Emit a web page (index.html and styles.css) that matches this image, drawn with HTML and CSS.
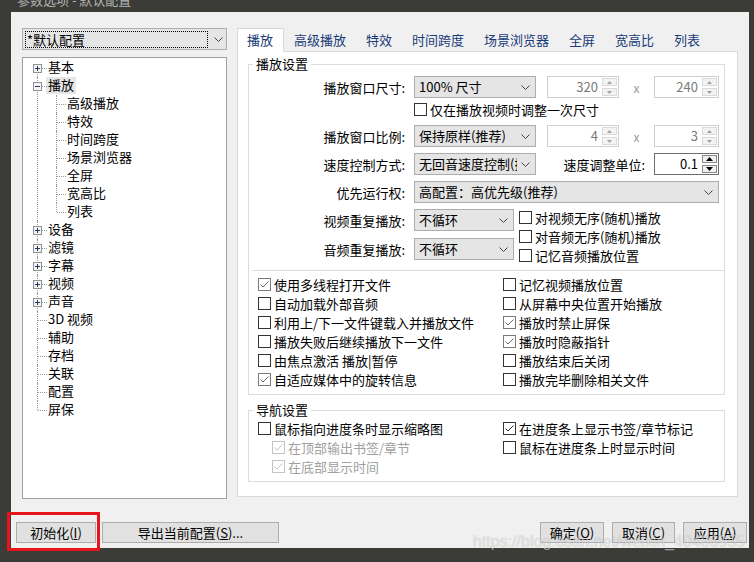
FILE: index.html
```html
<!DOCTYPE html>
<html lang="zh-CN">
<head>
<meta charset="utf-8">
<title>参数选项 - 默认配置</title>
<link rel="stylesheet" href="styles.css">
</head>
<body>
<div class="titlebar"><span class="title-text">参数选项 - 默认配置</span></div>
<div class="window">
  <div class="main">
    <div class="left-col">
      <div class="combo profile">
        <span class="focus">*默认配置</span>
        <svg class="chev" width="9" height="5" viewBox="0 0 9 5"><path d="M0.5 0.5L4.5 4.5L8.5 0.5" fill="none" stroke="#444"/></svg>
      </div>
      <ul class="tree">
        <li class="n"><div class="nr"><span class="exp"><svg width="9" height="9" viewBox="0 0 9 9"><rect x="0.5" y="0.5" width="8" height="8" fill="#f4f4f4" stroke="#919191"/><path d="M2 4.5h5M4.5 2v5" stroke="#22386b"/></svg></span><span class="t">基本</span></div></li>
        <li class="n"><div class="nr"><span class="exp"><svg width="9" height="9" viewBox="0 0 9 9"><rect x="0.5" y="0.5" width="8" height="8" fill="#f4f4f4" stroke="#919191"/><path d="M2 4.5h5" stroke="#22386b"/></svg></span><span class="t sel">播放</span></div>
          <ul class="sub">
            <li class="s"><div class="nr"><span class="t">高级播放</span></div></li>
            <li class="s"><div class="nr"><span class="t">特效</span></div></li>
            <li class="s"><div class="nr"><span class="t">时间跨度</span></div></li>
            <li class="s"><div class="nr"><span class="t">场景浏览器</span></div></li>
            <li class="s"><div class="nr"><span class="t">全屏</span></div></li>
            <li class="s"><div class="nr"><span class="t">宽高比</span></div></li>
            <li class="s"><div class="nr"><span class="t">列表</span></div></li>
          </ul>
        </li>
        <li class="n"><div class="nr"><span class="exp"><svg width="9" height="9" viewBox="0 0 9 9"><rect x="0.5" y="0.5" width="8" height="8" fill="#f4f4f4" stroke="#919191"/><path d="M2 4.5h5M4.5 2v5" stroke="#22386b"/></svg></span><span class="t">设备</span></div></li>
        <li class="n"><div class="nr"><span class="exp"><svg width="9" height="9" viewBox="0 0 9 9"><rect x="0.5" y="0.5" width="8" height="8" fill="#f4f4f4" stroke="#919191"/><path d="M2 4.5h5M4.5 2v5" stroke="#22386b"/></svg></span><span class="t">滤镜</span></div></li>
        <li class="n"><div class="nr"><span class="exp"><svg width="9" height="9" viewBox="0 0 9 9"><rect x="0.5" y="0.5" width="8" height="8" fill="#f4f4f4" stroke="#919191"/><path d="M2 4.5h5M4.5 2v5" stroke="#22386b"/></svg></span><span class="t">字幕</span></div></li>
        <li class="n"><div class="nr"><span class="exp"><svg width="9" height="9" viewBox="0 0 9 9"><rect x="0.5" y="0.5" width="8" height="8" fill="#f4f4f4" stroke="#919191"/><path d="M2 4.5h5M4.5 2v5" stroke="#22386b"/></svg></span><span class="t">视频</span></div></li>
        <li class="n"><div class="nr"><span class="exp"><svg width="9" height="9" viewBox="0 0 9 9"><rect x="0.5" y="0.5" width="8" height="8" fill="#f4f4f4" stroke="#919191"/><path d="M2 4.5h5M4.5 2v5" stroke="#22386b"/></svg></span><span class="t">声音</span></div></li>
        <li class="n"><div class="nr"><span class="t">3D 视频</span></div></li>
        <li class="n"><div class="nr"><span class="t">辅助</span></div></li>
        <li class="n"><div class="nr"><span class="t">存档</span></div></li>
        <li class="n"><div class="nr"><span class="t">关联</span></div></li>
        <li class="n"><div class="nr"><span class="t">配置</span></div></li>
        <li class="n"><div class="nr"><span class="t">屏保</span></div></li>
      </ul>
    </div>

    <div class="right-col">
      <div class="tabs">
        <div class="tab active">播放</div>
        <div class="tab">高级播放</div>
        <div class="tab">特效</div>
        <div class="tab">时间跨度</div>
        <div class="tab">场景浏览器</div>
        <div class="tab">全屏</div>
        <div class="tab">宽高比</div>
        <div class="tab">列表</div>
      </div>
      <div class="panel">
        <fieldset class="group g-play">
          <legend>播放设置</legend>

          <div class="frow">
            <span class="lbl">播放窗口尺寸:</span>
            <div class="combo w122"><span class="cv">100% 尺寸</span><svg class="chev" width="9" height="5" viewBox="0 0 9 5"><path d="M0.5 0.5L4.5 4.5L8.5 0.5" fill="none" stroke="#444"/></svg></div>
            <div class="spin dis w72"><span class="sv">320</span><span class="sbtns"><span class="sb"><svg width="5" height="3" viewBox="0 0 5 3"><path d="M0 3L2.5 0L5 3Z" fill="#a0a0a0"/></svg></span><span class="sb"><svg width="5" height="3" viewBox="0 0 5 3"><path d="M0 0L2.5 3L5 0Z" fill="#a0a0a0"/></svg></span></span></div>
            <span class="times">x</span>
            <div class="spin dis w65"><span class="sv">240</span><span class="sbtns"><span class="sb"><svg width="5" height="3" viewBox="0 0 5 3"><path d="M0 3L2.5 0L5 3Z" fill="#a0a0a0"/></svg></span><span class="sb"><svg width="5" height="3" viewBox="0 0 5 3"><path d="M0 0L2.5 3L5 0Z" fill="#a0a0a0"/></svg></span></span></div>
          </div>

          <div class="crow">
            <span class="cbi"><span class="cb"></span>仅在播放视频时调整一次尺寸</span>
          </div>

          <div class="frow mt7">
            <span class="lbl">播放窗口比例:</span>
            <div class="combo w122"><span class="cv">保持原样(推荐)</span><svg class="chev" width="9" height="5" viewBox="0 0 9 5"><path d="M0.5 0.5L4.5 4.5L8.5 0.5" fill="none" stroke="#444"/></svg></div>
            <div class="spin dis w72"><span class="sv">4</span><span class="sbtns"><span class="sb"><svg width="5" height="3" viewBox="0 0 5 3"><path d="M0 3L2.5 0L5 3Z" fill="#a0a0a0"/></svg></span><span class="sb"><svg width="5" height="3" viewBox="0 0 5 3"><path d="M0 0L2.5 3L5 0Z" fill="#a0a0a0"/></svg></span></span></div>
            <span class="times">x</span>
            <div class="spin dis w65"><span class="sv">3</span><span class="sbtns"><span class="sb"><svg width="5" height="3" viewBox="0 0 5 3"><path d="M0 3L2.5 0L5 3Z" fill="#a0a0a0"/></svg></span><span class="sb"><svg width="5" height="3" viewBox="0 0 5 3"><path d="M0 0L2.5 3L5 0Z" fill="#a0a0a0"/></svg></span></span></div>
          </div>

          <div class="frow mt6">
            <span class="lbl">速度控制方式:</span>
            <div class="combo w122"><span class="cv">无回音速度控制(推荐)</span><svg class="chev" width="9" height="5" viewBox="0 0 9 5"><path d="M0.5 0.5L4.5 4.5L8.5 0.5" fill="none" stroke="#444"/></svg></div>
            <span class="lbl2">速度调整单位:</span>
            <div class="spin act w65"><span class="sv">0.1</span><span class="sbtns"><span class="sb"><svg width="7" height="4" viewBox="0 0 7 4"><path d="M0 4L3.5 0L7 4Z" fill="#000"/></svg></span><span class="sb"><svg width="7" height="4" viewBox="0 0 7 4"><path d="M0 0L3.5 4L7 0Z" fill="#000"/></svg></span></span></div>
          </div>

          <div class="frow mt6">
            <span class="lbl">优先运行权:</span>
            <div class="combo w305"><span class="cv">高配置：高优先级(推荐)</span><svg class="chev" width="9" height="5" viewBox="0 0 9 5"><path d="M0.5 0.5L4.5 4.5L8.5 0.5" fill="none" stroke="#444"/></svg></div>
          </div>

          <div class="rep">
            <div class="rep-l">
              <div class="frow">
                <span class="lbl">视频重复播放:</span>
                <div class="combo w100"><span class="cv">不循环</span><svg class="chev" width="9" height="5" viewBox="0 0 9 5"><path d="M0.5 0.5L4.5 4.5L8.5 0.5" fill="none" stroke="#444"/></svg></div>
              </div>
              <div class="frow mt7">
                <span class="lbl">音频重复播放:</span>
                <div class="combo w100"><span class="cv">不循环</span><svg class="chev" width="9" height="5" viewBox="0 0 9 5"><path d="M0.5 0.5L4.5 4.5L8.5 0.5" fill="none" stroke="#444"/></svg></div>
              </div>
            </div>
            <div class="rep-r">
              <span class="cbi"><span class="cb"></span>对视频无序(随机)播放</span>
              <span class="cbi"><span class="cb"></span>对音频无序(随机)播放</span>
              <span class="cbi"><span class="cb"></span>记忆音频播放位置</span>
            </div>
          </div>

          <div class="sep"></div>

          <div class="chk">
            <span class="cbi"><span class="cb on"><svg width="11" height="11" viewBox="0 0 11 11"><path d="M1.5 5.5L4 8L9.5 2.5" fill="none" stroke="#6a6a6a"/></svg></span>使用多线程打开文件</span>
            <span class="cbi"><span class="cb"></span>记忆视频播放位置</span>
            <span class="cbi"><span class="cb"></span>自动加载外部音频</span>
            <span class="cbi"><span class="cb"></span>从屏幕中央位置开始播放</span>
            <span class="cbi"><span class="cb"></span>利用上/下一文件键载入并播放文件</span>
            <span class="cbi"><span class="cb on"><svg width="11" height="11" viewBox="0 0 11 11"><path d="M1.5 5.5L4 8L9.5 2.5" fill="none" stroke="#6a6a6a"/></svg></span>播放时禁止屏保</span>
            <span class="cbi"><span class="cb"></span>播放失败后继续播放下一文件</span>
            <span class="cbi"><span class="cb on"><svg width="11" height="11" viewBox="0 0 11 11"><path d="M1.5 5.5L4 8L9.5 2.5" fill="none" stroke="#6a6a6a"/></svg></span>播放时隐蔽指针</span>
            <span class="cbi"><span class="cb"></span>由焦点激活 播放|暂停</span>
            <span class="cbi"><span class="cb"></span>播放结束后关闭</span>
            <span class="cbi"><span class="cb on"><svg width="11" height="11" viewBox="0 0 11 11"><path d="M1.5 5.5L4 8L9.5 2.5" fill="none" stroke="#6a6a6a"/></svg></span>自适应媒体中的旋转信息</span>
            <span class="cbi"><span class="cb"></span>播放完毕删除相关文件</span>
          </div>
        </fieldset>

        <fieldset class="group g-nav">
          <legend>导航设置</legend>
          <div class="chk nav">
            <span class="cbi"><span class="cb"></span>鼠标指向进度条时显示缩略图</span>
            <span class="cbi"><span class="cb on dark"><svg width="11" height="11" viewBox="0 0 11 11"><path d="M1.5 5.5L4 8L9.5 2.5" fill="none" stroke="#333"/></svg></span>在进度条上显示书签/章节标记</span>
            <span class="cbi sub-i dis"><span class="cb on"><svg width="11" height="11" viewBox="0 0 11 11"><path d="M1.5 5.5L4 8L9.5 2.5" fill="none" stroke="#c4c4c4"/></svg></span>在顶部输出书签/章节</span>
            <span class="cbi"><span class="cb"></span>鼠标在进度条上时显示时间</span>
            <span class="cbi sub-i dis"><span class="cb on"><svg width="11" height="11" viewBox="0 0 11 11"><path d="M1.5 5.5L4 8L9.5 2.5" fill="none" stroke="#c4c4c4"/></svg></span>在底部显示时间</span>
          </div>
        </fieldset>
      </div>
    </div>
  </div>

  <div class="footer">
    <div class="btns">
      <button class="btn w80">初始化(<u>I</u>)</button>
      <button class="btn w177">导出当前配置(<u>S</u>)...</button>
    </div>
    <div class="btns right">
      <button class="btn w64">确定(<u>O</u>)</button>
      <button class="btn w63">取消(<u>C</u>)</button>
      <button class="btn w64">应用(<u>A</u>)</button>
    </div>
  </div>
</div>
<div class="annot"></div>
<div class="watermark">https://blog.csdn.net/weixin_40486955</div>
</body>
</html>
```

FILE: styles.css
```css
* { box-sizing: border-box; }
html, body { margin: 0; padding: 0; }
body {
  width: 754px;
  height: 562px;
  overflow: hidden;
  position: relative;
  background: #3b3b38;
  font-family: "Noto Sans CJK SC", "Noto Sans", sans-serif;
  font-size: 13px;
  color: #000;
}

.titlebar {
  height: 12px;
  overflow: hidden;
  padding-left: 17px;
}
.title-text {
  display: block;
  margin-top: -7px;
  line-height: 13px;
  font-size: 13px;
  color: #b5b5b5;
}

.window {
  margin-left: 11px;
  width: 738px;
  height: 536px;
  background: #f0f0f0;
  display: flex;
  flex-direction: column;
}

.main {
  display: flex;
  gap: 10px;
  padding: 16px 0 0 11px;
}

.left-col {
  width: 205px;
  display: flex;
  flex-direction: column;
  gap: 7px;
}

/* combo box */
.combo {
  height: 22px;
  border: 1px solid #adadad;
  background: #e5e5e5;
  display: flex;
  align-items: center;
  padding: 0 5px 0 4px;
  white-space: nowrap;
  line-height: 20px;
  flex: none;
}
.cv { flex: 1; overflow: hidden; }
.chev { flex: none; margin-left: 4px; }
.w122 { width: 122px; }
.w100 { width: 100px; }
.w305 { width: 305px; }

.profile { padding-left: 2px; padding-right: 3px; }
.profile .focus {
  width: 183px;
  height: 17px;
  border: 1px dotted #000;
  line-height: 15px;
  padding-left: 1px;
}
.profile .chev { margin-left: 6px; }

/* tree */
.tree {
  list-style: none;
  margin: 0;
  padding: 1px 0 0 0;
  height: 442px;
  border: 1px solid #a0a0a0;
  background: #fff;
}
.tree ul { list-style: none; margin: 0; padding: 0; }
.n { position: relative; padding-left: 25px; }
.n::before {
  content: "";
  position: absolute;
  left: 14px;
  top: 0;
  bottom: 0;
  border-left: 1px dotted #9a9a9a;
}
.n:first-child::before { top: 9px; }
.n:last-child::before { bottom: auto; height: 9px; }
.n::after {
  content: "";
  position: absolute;
  left: 15px;
  top: 9px;
  width: 9px;
  border-top: 1px dotted #9a9a9a;
}
.s { position: relative; padding-left: 19px; }
.s::before {
  content: "";
  position: absolute;
  left: 8px;
  top: 0;
  bottom: 0;
  border-left: 1px dotted #9a9a9a;
}
.s:last-child::before { bottom: auto; height: 9px; }
.s::after {
  content: "";
  position: absolute;
  left: 9px;
  top: 9px;
  width: 9px;
  border-top: 1px dotted #9a9a9a;
}
.exp {
  position: absolute;
  left: 10px;
  top: 5px;
  width: 9px;
  height: 9px;
  z-index: 1;
  display: block;
}
.exp svg { display: block; }
.nr { height: 18px; white-space: nowrap; }
.t {
  display: inline-block;
  height: 17px;
  line-height: 16px;
  padding: 0 2px;
  margin-left: -2px;
  vertical-align: top;
}
.t.sel { background: #e6e6e6; }

/* right column */
.right-col { width: 501px; }
.tabs {
  display: flex;
  height: 24px;
  position: relative;
  z-index: 1;
  margin-bottom: -1px;
}
.tab {
  height: 24px;
  padding: 1px 10px 0;
  line-height: 21px;
  color: #1b3b78;
  white-space: nowrap;
}
.tab.active {
  background: #fff;
  border: 1px solid #d9d9d9;
  border-bottom: none;
  padding: 0 10px 0 9px;
}
.panel {
  height: 446px;
  border: 1px solid #d9d9d9;
  background: #fff;
  padding: 0 0 0 10px;
}

.group {
  margin: 3px 0 0 0;
  width: 477px;
  border: 1px solid #dcdcdc;
  padding: 3px 0 5px 0;
  min-width: 0;
}
.group legend {
  margin-left: 4px;
  padding: 0 3px;
  line-height: 18px;
}
.g-nav { margin-top: 6px; padding-top: 0; padding-bottom: 5px; }

.frow {
  display: flex;
  align-items: center;
  height: 22px;
  white-space: nowrap;
}
.mt6 { margin-top: 6px; }
.mt7 { margin-top: 7px; }
.lbl {
  width: 156px;
  margin-right: 9px;
  text-align: right;
  flex: none;
}
.lbl2 {
  width: 109px;
  margin-right: 9px;
  text-align: right;
  flex: none;
}
.crow {
  height: 18px;
  margin-top: 2px;
  padding-left: 165px;
  display: flex;
  align-items: center;
}

/* spin box */
.spin {
  height: 22px;
  border: 1px solid #cfcfcf;
  background: #fff;
  display: flex;
  align-items: center;
  padding: 2px 1px 2px 0;
  flex: none;
}
.w72 { width: 72px; margin-left: 11px; }
.w65 { width: 65px; }
.sv {
  flex: 1;
  text-align: right;
  padding-right: 4px;
  line-height: 18px;
  color: #7a7a7a;
}
.sbtns {
  width: 15px;
  height: 18px;
  display: flex;
  flex-direction: column;
  gap: 2px;
}
.sb {
  flex: 1;
  border: 1px solid #dadada;
  background: #f3f3f3;
  display: flex;
  align-items: center;
  justify-content: center;
}
.sb svg { display: block; }
.spin.act { border-color: #6e6e6e; }
.spin.act .sv { color: #000; }
.spin.act .sb { border-color: #8a8a8a; background: #f0f0f0; }
.times {
  width: 35px;
  text-align: center;
  color: #9a9a9a;
  font-size: 12px;
  flex: none;
}

/* repeat block */
.rep { display: flex; margin-top: 6px; }
.rep-l { width: 265px; flex: none; }
.rep-r {
  margin-left: 5px;
  margin-top: -1px;
  display: flex;
  flex-direction: column;
}

/* checkboxes */
.cbi {
  display: flex;
  align-items: center;
  height: 19px;
  white-space: nowrap;
}
.cb {
  width: 13px;
  height: 13px;
  border: 1px solid #333;
  background: #fff;
  margin-right: 3px;
  flex: none;
}
.cb svg { display: block; }
.cb.on { border-color: #7a7a7a; }
.cb.on.dark { border-color: #333; }
.cbi.dis { color: #a0a0a0; }
.cbi.dis .cb { border-color: #c4c4c4; }
.sub-i { padding-left: 14px; }

.sep {
  height: 1px;
  background: #dcdcdc;
  margin: 5px 0 0 3px;
}
.chk {
  display: grid;
  grid-template-columns: 245px auto;
  padding-left: 9px;
  margin-top: 4px;
}
.chk.nav { margin-top: 0; }

/* footer */
.footer {
  display: flex;
  justify-content: space-between;
  margin-top: 23px;
  padding: 0 2px 0 5px;
}
.btns { display: flex; gap: 6px; }
.btns.right { gap: 8px; }
.btn {
  height: 21px;
  border: 1px solid #adadad;
  background: #e1e1e1;
  font-family: inherit;
  font-size: 13px;
  line-height: 19px;
  padding: 0;
  color: #000;
  text-align: center;
}
.btn u { text-decoration: underline; }
.w80 { width: 80px; }
.w177 { width: 177px; }
.w64 { width: 64px; }
.w63 { width: 63px; }

/* annotation overlay and watermark */
.annot {
  position: absolute;
  left: 7px;
  top: 512px;
  width: 93px;
  height: 39px;
  border: 3px solid #e8141c;
}
.watermark {
  position: absolute;
  left: 473px;
  top: 533px;
  font-family: "Liberation Sans", sans-serif;
  font-size: 16px;
  color: rgba(255, 255, 255, 0.55);
  text-shadow: 0 0 1px rgba(0, 0, 0, 0.25);
  white-space: nowrap;
}
```
